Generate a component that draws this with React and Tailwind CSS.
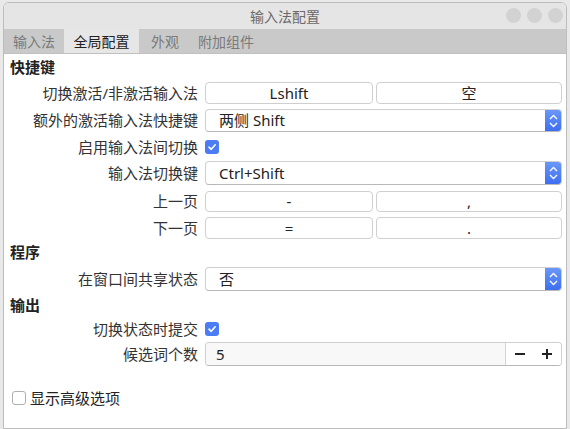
import React from "react";

const FONT = { fontFamily: '"Noto Sans", "Noto Sans CJK SC", sans-serif' };

/* ================= SMALL PIECES ================= */
const Label = ({ children }) => (
  <div className="w-[201px] shrink-0 pr-[7px] text-right text-[15px] text-[#333]">{children}</div>
);

const Heading = ({ children, className = "" }) => (
  <div className={`h-[21px] flex items-center pl-[6px] text-[15px] font-bold text-[#222] ${className}`}>
    {children}
  </div>
);

const KeyButton = ({ children, className = "" }) => (
  <div
    className={`h-full flex items-center justify-center rounded-[4px] border border-[#cfcfcf] bg-white text-[15px] text-[#222] ${className}`}
  >
    {children}
  </div>
);

const Check = () => (
  <div className="h-[14px] w-[14px] rounded-[3px] bg-[#4b7cf3] flex items-center justify-center">
    <svg width="10" height="10" viewBox="0 0 10 10">
      <path d="M2 5.2 L4.2 7.3 L8.2 2.8" fill="none" stroke="white" strokeWidth="1.6" strokeLinecap="round" strokeLinejoin="round" />
    </svg>
  </div>
);

const Combo = ({ children }) => (
  <div className="flex-1 h-full flex rounded-[4px] border border-[#cfcfcf] border-b-[#b8b8b8] bg-white overflow-hidden">
    <div className="flex-1 flex items-center pl-[13px] text-[15px] text-[#222]">{children}</div>
    <div className="w-[16px] bg-gradient-to-b from-[#6a97f7] to-[#3e6ef0] flex flex-col items-center justify-center gap-[2px]">
      <svg width="9" height="6" viewBox="0 0 9 6">
        <path d="M1 5 L4.5 1.5 L8 5" fill="none" stroke="white" strokeWidth="1.3" />
      </svg>
      <svg width="9" height="6" viewBox="0 0 9 6">
        <path d="M1 1 L4.5 4.5 L8 1" fill="none" stroke="white" strokeWidth="1.3" />
      </svg>
    </div>
  </div>
);

const Row = ({ label, className = "", children }) => (
  <div className={`flex items-center ${className}`}>
    <Label>{label}</Label>
    <div className="flex-1 h-full flex items-center gap-[3px]">{children}</div>
  </div>
);

export default function App() {
  return (
    <div className="w-[570px] h-[429px] bg-[#e9e9e9] pt-[2px] pl-[3px] pr-[3px]" style={FONT}>
      <div className="h-[427px] flex flex-col rounded-t-[6px] border border-[#bdbdbd] bg-white overflow-hidden">
        {/* ================= TITLE BAR ================= */}
        <div className="h-[26px] shrink-0 relative flex items-center justify-center bg-[#e5e5e5] text-[14px] text-[#6a6a6a]">
          输入法配置
          <div className="absolute right-[3px] top-[5px] flex gap-[6px]">
            <div className="h-[15px] w-[15px] rounded-full bg-[#d2d2d2]" />
            <div className="h-[15px] w-[15px] rounded-full bg-[#d2d2d2]" />
            <div className="h-[15px] w-[15px] rounded-full bg-[#d2d2d2]" />
          </div>
        </div>

        {/* ================= TABS ================= */}
        <div className="h-[25px] shrink-0 flex bg-[#c9c9c9] text-[14px] text-[#7a7a7a] border-b border-[#c0c0c0]">
          <div className="w-[60px] flex items-center justify-center">输入法</div>
          <div className="w-[75px] flex items-center justify-center bg-[#e6e6e6] text-[#222]">全局配置</div>
          <div className="w-[52px] flex items-center justify-center">外观</div>
          <div className="w-[70px] flex items-center justify-center">附加组件</div>
        </div>

        {/* ================= CONTENT ================= */}
        <div className="flex-1 flex flex-col pr-[4px]">
          <Heading className="mt-[3px]">快捷键</Heading>

          <Row label="切换激活/非激活输入法" className="h-[22px] mt-[4px]">
            <KeyButton className="w-[168px]">Lshift</KeyButton>
            <KeyButton className="flex-1">空</KeyButton>
          </Row>

          <Row label="额外的激活输入法快捷键" className="h-[23px] mt-[5px]">
            <Combo>两侧 Shift</Combo>
          </Row>

          <Row label="启用输入法间切换" className="h-[22px] mt-[4px]">
            <Check />
          </Row>

          <Row label="输入法切换键" className="h-[24px] mt-[3px]">
            <Combo>Ctrl+Shift</Combo>
          </Row>

          <Row label="上一页" className="h-[21px] mt-[6px]">
            <KeyButton className="w-[168px]">-</KeyButton>
            <KeyButton className="flex-1">,</KeyButton>
          </Row>

          <Row label="下一页" className="h-[22px] mt-[5px]">
            <KeyButton className="w-[168px]">=</KeyButton>
            <KeyButton className="flex-1">.</KeyButton>
          </Row>

          <Heading className="mt-[3px]">程序</Heading>

          <Row label="在窗口间共享状态" className="h-[24px] mt-[4px]">
            <Combo>否</Combo>
          </Row>

          <Heading className="mt-[4px]">输出</Heading>

          <Row label="切换状态时提交" className="h-[22px] mt-[2px]">
            <Check />
          </Row>

          <Row label="候选词个数" className="h-[24px] mt-[2px]">
            <div className="flex-1 h-full flex rounded-[4px] border border-[#cfcfcf] border-b-[#b8b8b8] overflow-hidden">
              <div className="flex-1 flex items-center pl-[10px] bg-[#f8f8f8] text-[15px] text-[#222]">5</div>
              <div className="w-[56px] flex items-center justify-around border-l border-[#d4d4d4] bg-white text-[#222]">
                <svg width="12" height="12" viewBox="0 0 12 12">
                  <path d="M1 6 H11" stroke="#222" strokeWidth="2" />
                </svg>
                <svg width="12" height="12" viewBox="0 0 12 12">
                  <path d="M1 6 H11 M6 1 V11" stroke="#222" strokeWidth="2" />
                </svg>
              </div>
            </div>
          </Row>

          <div className="mt-[22px] flex items-center gap-[4px] pl-[8px] h-[20px] text-[15px] text-[#222]">
            <div className="h-[14px] w-[14px] rounded-[3px] border border-[#b0b0b0] bg-white" />
            显示高级选项
          </div>
        </div>
      </div>
    </div>
  );
}
